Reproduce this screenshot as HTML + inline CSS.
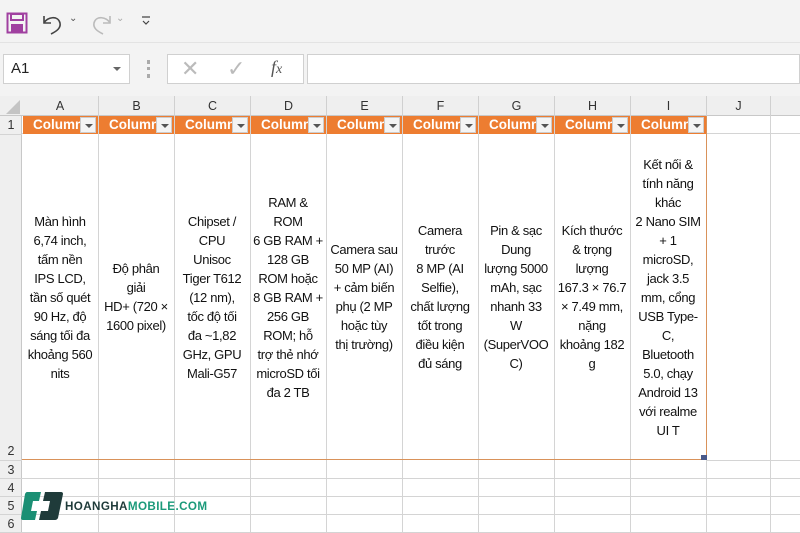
<!DOCTYPE html>
<html><head><meta charset="utf-8"><style>
*{margin:0;padding:0;box-sizing:border-box}
body{width:800px;height:533px;overflow:hidden;background:#fff;font-family:"Liberation Sans",sans-serif;position:relative}
.a{position:absolute}
.vl{position:absolute;width:1px;background:#d4d4d4}
.hl{position:absolute;height:1px;background:#d4d4d4}
.ch{position:absolute;top:96px;height:20px;font-size:12.5px;color:#333;text-align:center;line-height:20px;border-right:1px solid #d0d0d0}
.rh{position:absolute;left:0;width:22px;font-size:12.5px;color:#333;text-align:center}
.hdr{position:absolute;top:116px;height:18px;background:#ed7d31;color:#fff;font-weight:bold;font-size:13.5px;line-height:18px;padding-left:10px;overflow:hidden;white-space:nowrap}
.dd{position:absolute;top:117px;width:16px;height:16px;background:#f4f4f4;border:1px solid #ccc}
.dd:after{content:"";position:absolute;left:4px;top:6px;border-left:4px solid transparent;border-right:4px solid transparent;border-top:4px solid #555}
.c{position:absolute;top:134px;height:326px;width:76px;display:flex;align-items:center;justify-content:center;text-align:center;font-size:13px;line-height:19px;color:#111;letter-spacing:-0.35px;white-space:nowrap}
</style></head><body>
<div class="a" style="left:0;top:0;width:800px;height:96px;background:#f3f3f3"></div>
<div class="a" style="left:0;top:42px;width:800px;height:1px;background:#e3e3e3"></div>
<svg class="a" style="left:6px;top:12px" width="22" height="22" viewBox="0 0 22 22"><rect x="1.5" y="1.5" width="19" height="19" fill="none" stroke="#a040a0" stroke-width="2"/><rect x="5" y="2" width="12" height="6" fill="none" stroke="#a040a0" stroke-width="2"/><rect x="5" y="12" width="12" height="8" fill="#a040a0"/></svg>
<svg class="a" style="left:40px;top:10px" width="26" height="26" viewBox="0 0 26 26"><path d="M4 6v7h7" fill="none" stroke="#444" stroke-width="1.6"/><path d="M4 13c3-6 14-8 16 0 1 5-3 8-9 11" fill="none" stroke="#444" stroke-width="1.6"/></svg>
<div class="a" style="left:69px;top:13px;font-size:10px;color:#555">⌄</div>
<svg class="a" style="left:88px;top:10px" width="26" height="26" viewBox="0 0 26 26"><path d="M22 6v7h-7" fill="none" stroke="#bbb" stroke-width="1.6"/><path d="M22 13c-3-6-14-8-16 0-1 5 3 8 9 11" fill="none" stroke="#bbb" stroke-width="1.6"/></svg>
<div class="a" style="left:116px;top:13px;font-size:10px;color:#aaa">⌄</div>
<svg class="a" style="left:140px;top:15px" width="12" height="12" viewBox="0 0 12 12"><path d="M2 2h8M3 6l3 3 3-3" fill="none" stroke="#444" stroke-width="1.2"/></svg>
<div class="a" style="left:3px;top:54px;width:127px;height:30px;background:#fff;border:1px solid #d0d0d0;font-size:15px;line-height:28px;padding-left:7px;color:#222">A1</div>
<div class="a" style="left:113px;top:67px;border-left:4px solid transparent;border-right:4px solid transparent;border-top:4px solid #666"></div>
<div class="a" style="left:147px;top:60px;width:3px;height:18px;border-left:3px dotted #aaa"></div>
<div class="a" style="left:167px;top:54px;width:137px;height:30px;background:#fff;border:1px solid #d0d0d0"></div>
<div class="a" style="left:181px;top:56px;font-size:22px;color:#bbb">✕</div>
<div class="a" style="left:227px;top:56px;font-size:22px;color:#bbb">✓</div>
<div class="a" style="left:271px;top:57px;font-size:18px;font-style:italic;font-family:'Liberation Serif',serif;color:#555">f<span style="font-size:14px">x</span></div>
<div class="a" style="left:307px;top:54px;width:493px;height:30px;background:#fff;border:1px solid #d0d0d0"></div>
<div class="a" style="left:0;top:96px;width:800px;height:20px;background:#efefef;border-bottom:1px solid #c8c8c8"></div>
<svg class="a" style="left:4px;top:100px" width="16" height="14"><path d="M16 0V14H2Z" fill="#c4c4c4"/></svg>
<div class="ch" style="left:22px;width:77px">A</div><div class="ch" style="left:99px;width:76px">B</div><div class="ch" style="left:175px;width:76px">C</div><div class="ch" style="left:251px;width:76px">D</div><div class="ch" style="left:327px;width:76px">E</div><div class="ch" style="left:403px;width:76px">F</div><div class="ch" style="left:479px;width:76px">G</div><div class="ch" style="left:555px;width:76px">H</div><div class="ch" style="left:631px;width:76px">I</div><div class="ch" style="left:707px;width:64px">J</div>
<div class="a" style="left:0;top:116px;width:22px;height:417px;background:#efefef;border-right:1px solid #c8c8c8"></div>
<div class="rh" style="top:116px;line-height:18px">1</div>
<div class="rh" style="top:442px;line-height:18px">2</div>
<div class="rh" style="top:461px;line-height:18px">3</div>
<div class="rh" style="top:479px;line-height:18px">4</div>
<div class="rh" style="top:497px;line-height:18px">5</div>
<div class="rh" style="top:515px;line-height:18px">6</div>
<div class="hl" style="left:0;width:22px;top:134px"></div><div class="hl" style="left:0;width:22px;top:460px"></div><div class="hl" style="left:0;width:22px;top:478px"></div><div class="hl" style="left:0;width:22px;top:496px"></div><div class="hl" style="left:0;width:22px;top:514px"></div><div class="hl" style="left:0;width:22px;top:532px"></div>
<div class="vl" style="left:98px;top:116px;height:417px"></div><div class="vl" style="left:174px;top:116px;height:417px"></div><div class="vl" style="left:250px;top:116px;height:417px"></div><div class="vl" style="left:326px;top:116px;height:417px"></div><div class="vl" style="left:402px;top:116px;height:417px"></div><div class="vl" style="left:478px;top:116px;height:417px"></div><div class="vl" style="left:554px;top:116px;height:417px"></div><div class="vl" style="left:630px;top:116px;height:417px"></div><div class="vl" style="left:706px;top:116px;height:417px"></div><div class="vl" style="left:770px;top:116px;height:417px"></div>
<div class="hl" style="left:22px;width:778px;top:133px"></div>
<div class="hl" style="left:22px;width:778px;top:478px"></div><div class="hl" style="left:22px;width:778px;top:496px"></div><div class="hl" style="left:22px;width:778px;top:514px"></div><div class="hl" style="left:22px;width:778px;top:532px"></div>
<div class="hl" style="left:706px;width:94px;top:460px"></div>
<div class="a" style="left:22px;top:459px;width:685px;height:1px;background:#d9925a"></div>
<div class="a" style="left:706px;top:116px;width:1px;height:344px;background:#d9925a"></div>
<div class="a" style="left:701px;top:455px;width:6px;height:5px;background:#4a5a8a"></div>
<div class="hdr" style="left:23px;width:75px">Column</div><div class="dd" style="left:80px"></div>
<div class="hdr" style="left:99px;width:75px">Column</div><div class="dd" style="left:156px"></div>
<div class="hdr" style="left:175px;width:75px">Column</div><div class="dd" style="left:232px"></div>
<div class="hdr" style="left:251px;width:75px">Column</div><div class="dd" style="left:308px"></div>
<div class="hdr" style="left:327px;width:75px">Column</div><div class="dd" style="left:384px"></div>
<div class="hdr" style="left:403px;width:75px">Column</div><div class="dd" style="left:460px"></div>
<div class="hdr" style="left:479px;width:75px">Column</div><div class="dd" style="left:536px"></div>
<div class="hdr" style="left:555px;width:75px">Column</div><div class="dd" style="left:612px"></div>
<div class="hdr" style="left:631px;width:75px">Column</div><div class="dd" style="left:688px"></div>
<div class="c" style="left:22px">Màn hình<br>6,74 inch,<br>tấm nền<br>IPS LCD,<br>tần số quét<br>90 Hz, độ<br>sáng tối đa<br>khoảng 560<br>nits</div>
<div class="c" style="left:98px">Độ phân<br>giải<br>HD+ (720 ×<br>1600 pixel)</div>
<div class="c" style="left:174px">Chipset /<br>CPU<br>Unisoc<br>Tiger T612<br>(12 nm),<br>tốc độ tối<br>đa ~1,82<br>GHz, GPU<br>Mali-G57</div>
<div class="c" style="left:250px">RAM &amp;<br>ROM<br>6 GB RAM +<br>128 GB<br>ROM hoặc<br>8 GB RAM +<br>256 GB<br>ROM; hỗ<br>trợ thẻ nhớ<br>microSD tối<br>đa 2 TB</div>
<div class="c" style="left:326px">Camera sau<br>50 MP (AI)<br>+ cảm biến<br>phụ (2 MP<br>hoặc tùy<br>thị trường)</div>
<div class="c" style="left:402px">Camera<br>trước<br>8 MP (AI<br>Selfie),<br>chất lượng<br>tốt trong<br>điều kiện<br>đủ sáng</div>
<div class="c" style="left:478px">Pin &amp; sạc<br>Dung<br>lượng 5000<br>mAh, sạc<br>nhanh 33<br>W<br>(SuperVOO<br>C)</div>
<div class="c" style="left:554px">Kích thước<br>&amp; trọng<br>lượng<br>167.3 × 76.7<br>× 7.49 mm,<br>nặng<br>khoảng 182<br>g</div>
<div class="c" style="left:630px">Kết nối &amp;<br>tính năng<br>khác<br>2 Nano SIM<br>+ 1<br>microSD,<br>jack 3.5<br>mm, cổng<br>USB Type-<br>C,<br>Bluetooth<br>5.0, chạy<br>Android 13<br>với realme<br>UI T</div>
<svg class="a" style="left:21px;top:492px" width="42" height="28" viewBox="0 0 42 28"><path d="M5 0H20L18 9H12L10 19H16L14 28H2Q0 28 0 26L4 2Q5 0 6 0Z" fill="#1b8f74"/><path d="M24 0H40Q42 0 42 2L37 26Q36 28 34 28H18L20 19H27L29 9H22Z" fill="#1f3b3a"/></svg>
<div class="a" style="left:65px;top:500px;font-size:12px;font-weight:bold;letter-spacing:0.4px;line-height:13px;transform:scaleX(0.97);transform-origin:left"><span style="color:#1f3b3a">HOANGHA</span><span style="color:#1b9a7a">MOBILE.COM</span></div>
</body></html>
